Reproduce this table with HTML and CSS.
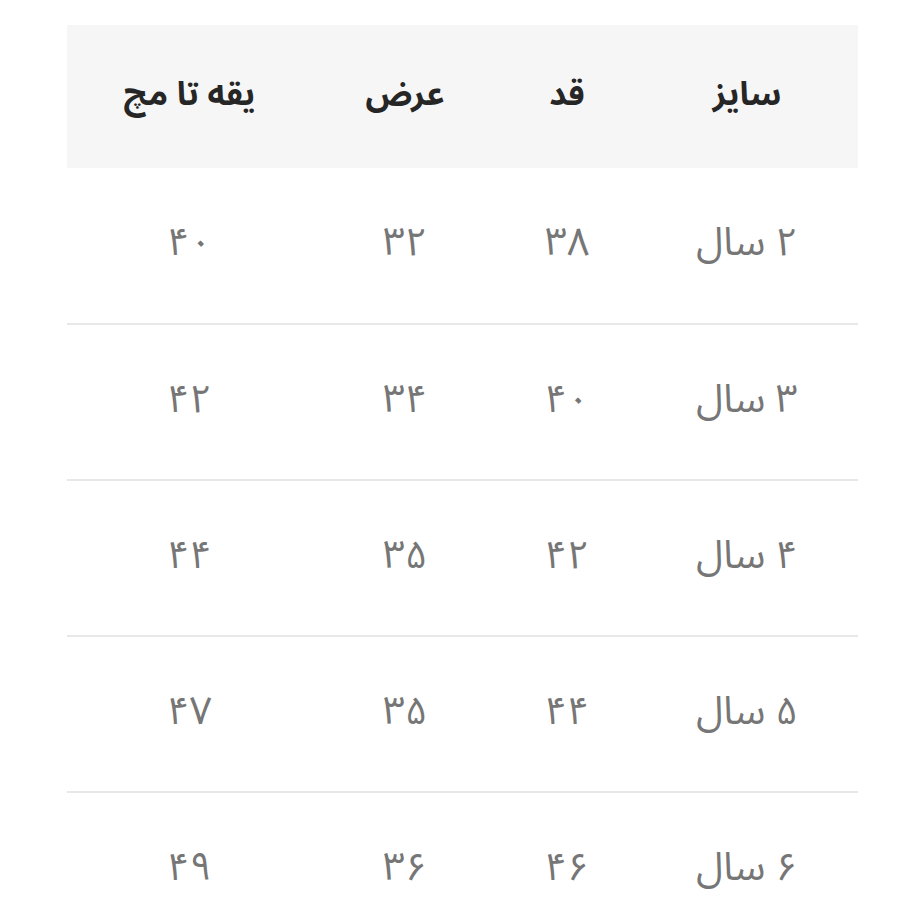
FILE: index.html
```html
<!DOCTYPE html>
<html lang="fa" dir="rtl">
<head>
<meta charset="utf-8">
<link rel="stylesheet" href="styles.css">
</head>
<body>
<div class="wrap">
<table class="sizes">
<colgroup>
<col class="c1"><col class="c2"><col class="c3"><col class="c4">
</colgroup>
<thead>
<tr><th>سایز</th><th>قد</th><th>عرض</th><th>یقه تا مچ</th></tr>
</thead>
<tbody>
<tr><td>۲ سال</td><td>۳۸</td><td>۳۲</td><td>۴۰</td></tr>
<tr><td>۳ سال</td><td>۴۰</td><td>۳۴</td><td>۴۲</td></tr>
<tr><td>۴ سال</td><td>۴۲</td><td>۳۵</td><td>۴۴</td></tr>
<tr><td>۵ سال</td><td>۴۴</td><td>۳۵</td><td>۴۷</td></tr>
<tr><td>۶ سال</td><td>۴۶</td><td>۳۶</td><td>۴۹</td></tr>
</tbody>
</table>
</div>
</body>
</html>
```
FILE: styles.css
```css
html, body {
  margin: 0;
  padding: 0;
  background: #ffffff;
}
.wrap {
  padding: 25px 42px 0 67px;
}
.sizes {
  width: 791px;
  border-collapse: collapse;
  table-layout: fixed;
  font-family: "Noto Sans Arabic", "DejaVu Sans", sans-serif;
  direction: rtl;
}
.c1 { width: 222px; }
.c2 { width: 138px; }
.c3 { width: 186px; }
.c4 { width: 245px; }
.sizes thead tr {
  background: #f6f6f6;
  height: 143px;
}
.sizes th {
  font-size: 33px;
  font-weight: bold;
  color: #262626;
  text-align: center;
  padding: 0 0 4px 0;
}
.sizes tbody tr {
  height: 156px;
  border-bottom: 2px solid #e8e8e8;
}
.sizes td {
  font-size: 39px;
  color: #767676;
  text-align: center;
  padding: 0 0 6px 0;
}
```
